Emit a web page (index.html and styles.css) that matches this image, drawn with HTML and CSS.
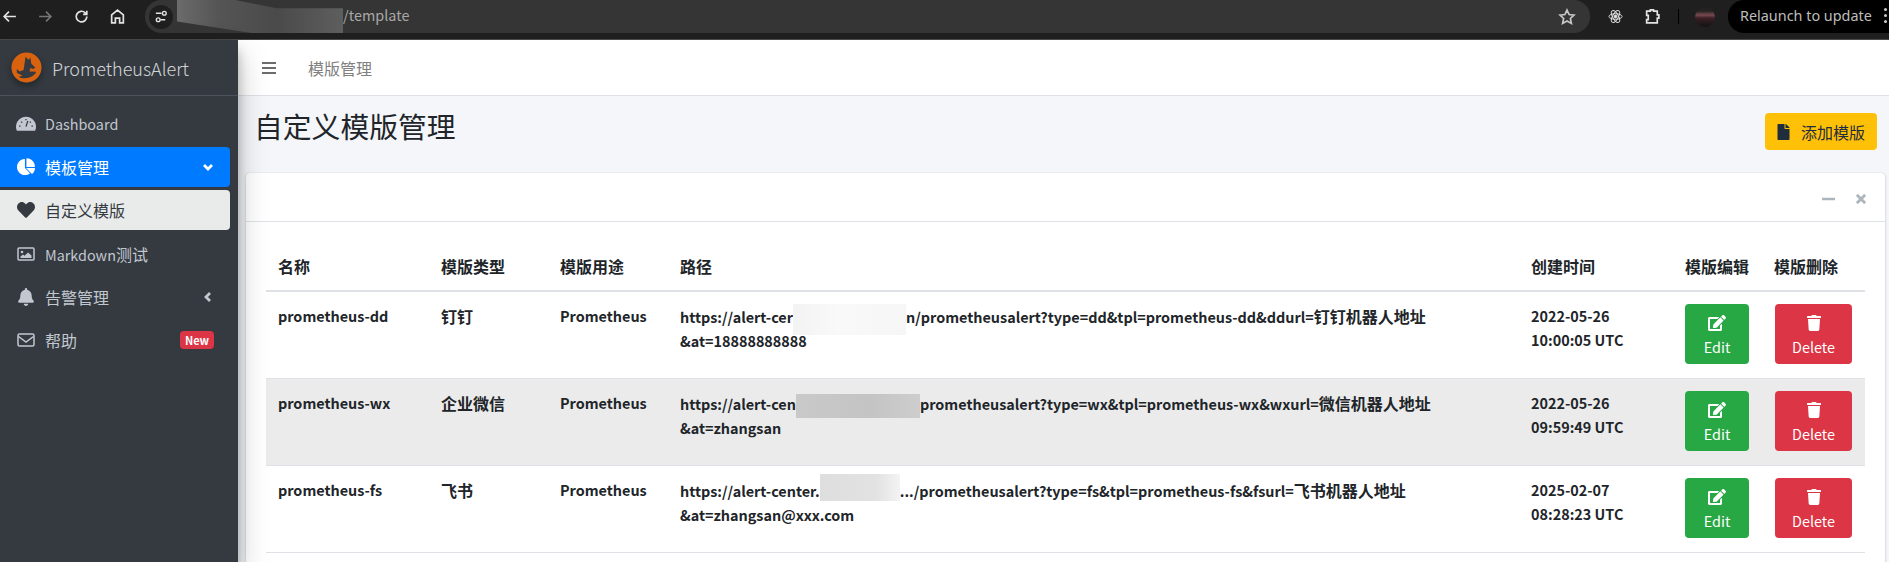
FILE: index.html
```html
<!DOCTYPE html>
<html lang="zh-CN">
<head>
    <meta charset="UTF-8">
    <title>PrometheusAlert</title>
    <link rel="stylesheet" href="styles.css">
</head>
<body>
    <svg class="icon-defs">
        <symbol id="i-edit" viewBox="0 0 576 512"><path d="M402.6 83.2l90.2 90.2c3.8 3.8 3.8 10 0 13.8L274.400 405.600l-92.800 10.300c-12.400 1.400-22.900-9.100-21.500-21.500l10.300-92.800L388.800 83.200c3.800-3.800 10-3.800 13.800 0zm162-22.900l-48.800-48.800c-15.200-15.200-39.900-15.200-55.200 0l-35.400 35.400c-3.800 3.800-3.800 10 0 13.800l90.200 90.200c3.800 3.800 10 3.800 13.800 0l35.400-35.400c15.200-15.300 15.200-40 0-55.200zM384 346.200V448H64V128h229.800c3.200 0 6.200-1.300 8.500-3.500l40-40c7.600-7.600 2.200-20.500-8.500-20.500H48C21.500 64 0 85.500 0 112v352c0 26.500 21.500 48 48 48h352c26.500 0 48-21.500 48-48V306.200c0-10.700-12.900-16-20.500-8.500l-40 40c-2.200 2.300-3.500 5.300-3.500 8.500z"/></symbol>
        <symbol id="i-trash" viewBox="0 0 448 512"><path d="M432 32H312l-9.400-18.700A24 24 0 0 0 281.100 0H166.800a23.720 23.720 0 0 0-21.400 13.300L136 32H16A16 16 0 0 0 0 48v32a16 16 0 0 0 16 16h416a16 16 0 0 0 16-16V48a16 16 0 0 0-16-16zM53.200 467a48 48 0 0 0 47.900 45h245.800a48 48 0 0 0 47.900-45L416 128H32z"/></symbol>
    </svg>

    <div class="chrome">
        <div class="chrome-nav">
            <svg class="chrome-icon" viewBox="0 0 16 16"><path d="M14 8H3M7.5 3.5 3 8l4.5 4.5"/></svg>
            <svg class="chrome-icon dim" viewBox="0 0 16 16"><path d="M2 8h11M8.5 3.5 13 8l-4.500 4.500"/></svg>
            <svg class="chrome-icon" viewBox="0 0 16 16"><path d="M13 8a5 5 0 1 1-1.500-3.500L13 6M13 2.500V6H9.500"/></svg>
            <svg class="chrome-icon" viewBox="0 0 16 16"><path d="M2.500 14V6.500L8 2l5.500 4.500V14H10V9.500H6V14z"/></svg>
        </div>
        <div class="omnibox">
            <span class="site-chip">
                <svg viewBox="0 0 16 16"><path d="M2 4.500h6M12 11.500H7"/><circle cx="11" cy="4.500" r="2"/><circle cx="4.500" cy="11.500" r="2"/></svg>
            </span>
            <span class="url-blur"></span>
            <span class="url-text">/template</span>
            <svg class="star" viewBox="0 0 16 16"><path d="m8 1.800 1.900 4 4.300.5-3.200 3 .9 4.400L8 11.500l-3.900 2.200.9-4.400-3.200-3 4.300-.5z"/></svg>
        </div>
        <div class="chrome-tools">
            <svg class="ext-atom" viewBox="0 0 16 16"><ellipse cx="8" cy="8" rx="7" ry="3"/><ellipse cx="8" cy="8" rx="7" ry="3" transform="rotate(60 8 8)"/><ellipse cx="8" cy="8" rx="7" ry="3" transform="rotate(120 8 8)"/><circle class="ext-core" cx="8" cy="8" r="1.500"/></svg>
            <svg class="chrome-icon ext-puzzle" viewBox="0 0 16 16"><path d="M2.500 3H6V1.800h3V3h3.500v3.500H14v3h-1.500V14h-10v-3H4V7H2.500z"/></svg>
            <span class="chrome-sep"></span>
            <span class="avatar"></span>
            <div class="relaunch">Relaunch to update<span class="menu-dots"></span></div>
        </div>
    </div>

    <div class="app">
        <aside class="sidebar">
            <div class="brand">
                <svg class="brand-logo" viewBox="0 0 32 32">
                    <circle cx="16" cy="16" r="15.500" fill="#d9620f"/>
                    <path fill="#343a40" d="M15 5l3 3 2-2 1 6 4 4-2 1.500-3-1-1 3.500 7 .5c-2 6-13 8.500-18 5l4-1-6-3 0-4 3 2.500 4-1.500z"/>
                </svg>
                <span class="brand-text">PrometheusAlert</span>
            </div>
            <nav class="side-nav">
                <a class="side-link">
                    <svg class="side-icon gauge" viewBox="0 0 576 512"><path d="M288 48C129 48 0 177 0 336c0 40 8 74 24 112h528c16-38 24-72 24-112C576 177 447 48 288 48z"/><path class="gauge-cut" d="M288 330 340 170M90 320h40M150 190l28 28M288 110v40M446 320h40M426 190l-28 28"/></svg>
                    <span class="side-label">Dashboard</span>
                </a>
                <a class="side-link is-open">
                    <svg class="side-icon" viewBox="0 0 544 512"><path d="M527.800 288H272l170.600 170.600c6.500 6.500 17.200 7 23.900.7 41.800-39.400 70.500-92.500 78.900-152.200 1.400-10.200-7.500-19.100-17.600-19.100zM544 239C536.600 106.900 432.900.5 300.900-8c-9-.6-16.900 7-16.900 16.400V256h243.800c9 0 17.100-7.900 16.200-17zM240 288V26.800c0-8.900-7.600-16.200-16.400-15.600C98.500 20.100 0 125 0 252.800 0 388.500 110 498.500 245.700 498.500c50.600 0 97.600-15.300 136.700-41.600 7.700-5.200 8.200-16.400 1.700-23z"/></svg>
                    <span class="side-label zh">模板管理</span>
                    <svg class="side-angle" viewBox="0 0 12 12"><path d="M2 4l4 4 4-4"/></svg>
                </a>
                <a class="side-link is-current">
                    <svg class="side-icon" viewBox="0 0 512 512"><path d="M462.300 62.600C407.500 15.900 326 24.300 275.700 76.200L256 96.500l-19.700-20.300C186.100 24.300 104.500 15.900 49.700 62.600c-62.800 53.600-66.100 149.800-9.900 207.900l193.500 199.800c12.500 12.900 32.800 12.900 45.300 0l193.500-199.800c56.300-58.100 53-154.300-9.800-207.900z"/></svg>
                    <span class="side-label zh">自定义模版</span>
                </a>
                <a class="side-link">
                    <svg class="side-icon line" viewBox="0 0 18 14"><rect x="1" y="1" width="16" height="12" rx="1"/><circle class="solid" cx="5" cy="5" r="1.300"/><path class="solid" d="M3.500 11V9.500L6 7.500l1.500 1.200L11 5.500l3.500 3V11z"/></svg>
                    <span class="side-label">Markdown<span class="zh">测试</span></span>
                </a>
                <a class="side-link">
                    <svg class="side-icon" viewBox="0 0 448 512"><path d="M224 512c35.320 0 63.970-28.650 63.970-64H160.030c0 35.350 28.650 64 63.970 64zm215.390-149.710c-19.320-20.760-55.470-51.990-55.470-154.290 0-77.700-54.480-139.900-127.940-155.160V32c0-17.670-14.320-32-31.980-32s-31.980 14.330-31.980 32v20.840C118.560 68.100 64.080 130.300 64.080 208c0 102.300-36.150 133.530-55.470 154.290-6 6.450-8.660 14.160-8.610 21.710.11 16.400 12.980 32 32.100 32h383.800c19.120 0 32-15.600 32.100-32 .05-7.550-2.610-15.270-8.610-21.710z"/></svg>
                    <span class="side-label zh">告警管理</span>
                    <svg class="side-angle" viewBox="0 0 12 12"><path d="M8 2 4 6l4 4"/></svg>
                </a>
                <a class="side-link">
                    <svg class="side-icon line" viewBox="0 0 18 14"><rect x="1" y="1" width="16" height="12" rx="1.500"/><path d="M1.500 3.500 9 9l7.500-5.500"/></svg>
                    <span class="side-label zh">帮助</span>
                    <span class="badge-new">New</span>
                </a>
            </nav>
        </aside>

        <div class="main">
            <header class="topbar">
                <svg class="bars" viewBox="0 0 14 12"><path d="M0 1h14M0 6h14M0 11h14"/></svg>
                <span class="topbar-link zh">模版管理</span>
            </header>
            <section class="content">
                <div class="content-head">
                    <h1>自定义模版管理</h1>
                    <a class="btn-add zh">
                        <svg viewBox="0 0 384 512"><path d="M224 136V0H24C10.700 0 0 10.700 0 24v464c0 13.300 10.700 24 24 24h336c13.300 0 24-10.700 24-24V160H248c-13.200 0-24-10.800-24-24zm160-14.100v6.100H256V0h6.100c6.400 0 12.500 2.500 17 7l97.900 98c4.500 4.500 7 10.600 7 16.900z"/></svg>
                        添加模版
                    </a>
                </div>
                <div class="card">
                    <div class="card-head">
                        <svg class="card-tool tool-min" viewBox="0 0 13 12"><path d="M0 6h13"/></svg>
                        <svg class="card-tool tool-close" viewBox="0 0 12 12"><path d="M1 1l10 10M11 1 1 11"/></svg>
                    </div>
                    <div class="card-body">
                        <table class="tpl-table">
                            <colgroup>
                                <col class="c-name"><col class="c-type"><col class="c-use"><col class="c-path"><col class="c-time"><col class="c-edit"><col class="c-del">
                            </colgroup>
                            <thead>
                                <tr><th>名称</th><th>模版类型</th><th>模版用途</th><th>路径</th><th>创建时间</th><th>模版编辑</th><th>模版删除</th></tr>
                            </thead>
                            <tbody>
                                <tr>
                                    <td>prometheus-dd</td><td class="zh">钉钉</td><td>Prometheus</td>
                                    <td>https://alert-cer<span class="mask mask-a"></span>n/prometheusalert?type=dd&amp;tpl=prometheus-dd&amp;ddurl=<span class="zh">钉钉机器人地址</span><br>&amp;at=18888888888</td>
                                    <td>2022-05-26<br>10:00:05 UTC</td>
                                    <td><a class="btn-act btn-edit"><svg class="act-edit"><use href="#i-edit"/></svg>Edit</a></td>
                                    <td><a class="btn-act btn-del"><svg class="act-trash"><use href="#i-trash"/></svg>Delete</a></td>
                                </tr>
                                <tr class="row-hover">
                                    <td>prometheus-wx</td><td class="zh">企业微信</td><td>Prometheus</td>
                                    <td>https://alert-cen<span class="mask mask-b"></span>prometheusalert?type=wx&amp;tpl=prometheus-wx&amp;wxurl=<span class="zh">微信机器人地址</span><br>&amp;at=zhangsan</td>
                                    <td>2022-05-26<br>09:59:49 UTC</td>
                                    <td><a class="btn-act btn-edit"><svg class="act-edit"><use href="#i-edit"/></svg>Edit</a></td>
                                    <td><a class="btn-act btn-del"><svg class="act-trash"><use href="#i-trash"/></svg>Delete</a></td>
                                </tr>
                                <tr>
                                    <td>prometheus-fs</td><td class="zh">飞书</td><td>Prometheus</td>
                                    <td>https://alert-center.<span class="mask mask-c"></span>.../prometheusalert?type=fs&amp;tpl=prometheus-fs&amp;fsurl=<span class="zh">飞书机器人地址</span><br>&amp;at=zhangsan@xxx.com</td>
                                    <td>2025-02-07<br>08:28:23 UTC</td>
                                    <td><a class="btn-act btn-edit"><svg class="act-edit"><use href="#i-edit"/></svg>Edit</a></td>
                                    <td><a class="btn-act btn-del"><svg class="act-trash"><use href="#i-trash"/></svg>Delete</a></td>
                                </tr>
                            </tbody>
                        </table>
                    </div>
                </div>
            </section>
        </div>
    </div>
</body>
</html>
```

FILE: styles.css
```css
* {
    box-sizing: border-box;
}
html, body {
    height: 562px;
    margin: 0;
    overflow: hidden;
}
body {
    font-family: "Noto Sans CJK SC", "Noto Sans", sans-serif;
    font-size: 14.4px;
    line-height: 24px;
    color: #212529;
}
.zh {
    font-size: 16px;
}
.icon-defs {
    display: none;
}

/* browser bar */
.chrome {
    display: flex;
    height: 40px;
    padding-bottom: 6px;
    background: #1f1f1f;
    border-bottom: 1px solid #4a4a4a;
    align-items: stretch;
}
.chrome-nav {
    display: flex;
    align-items: center;
    gap: 19px;
    width: 145px;
    padding-left: 1px;
}
.chrome-icon {
    width: 17px;
    height: 17px;
    fill: none;
    stroke: #e3e3e3;
    stroke-width: 1.6;
}
.chrome-icon.dim {
    stroke: #757575;
}
.omnibox {
    display: flex;
    align-items: center;
    width: 1445px;
    padding: 0 14px 0 4px;
    background: #353535;
    border-radius: 16px;
    color: #a8a8a8;
}
.site-chip {
    display: flex;
    align-items: center;
    justify-content: center;
    width: 24px;
    height: 24px;
    border-radius: 50%;
    background: #1f1f1f;
}
.site-chip svg {
    width: 15px;
    height: 15px;
    fill: none;
    stroke: #e3e3e3;
    stroke-width: 1.5;
}
.url-blur {
    width: 166px;
    height: 33px;
    margin-left: 4px;
    background: linear-gradient(90deg, #6b6b6b, #555 25%, #4a4a4a 60%, #5e5e5e);
    clip-path: polygon(0 0, 35% 0, 60% 25%, 100% 25%, 100% 100%, 45% 100%, 0 65%);
}
.url-text {
    flex: 1;
    padding-bottom: 3px;
}
.star {
    width: 18px;
    height: 18px;
    fill: none;
    stroke: #c7c7c7;
    stroke-width: 1.5;
}
.chrome-tools {
    display: flex;
    align-items: center;
    flex: 1;
    padding-left: 18px;
}
.ext-atom {
    width: 15px;
    height: 15px;
    fill: none;
    stroke: #e3e3e3;
    stroke-width: 1;
}
.ext-core {
    fill: #e3e3e3;
}
.ext-puzzle {
    margin-left: 21px;
}
.chrome-sep {
    width: 1px;
    height: 15px;
    margin-left: 17px;
    background: #000;
}
.avatar {
    width: 20px;
    height: 20px;
    margin-left: 16px;
    border-radius: 50%;
    background: linear-gradient(180deg, #222 20%, #7a4a50 40%, #3b2025 55%, #111);
}
.relaunch {
    display: flex;
    align-items: center;
    flex: 1;
    height: 33px;
    margin-left: 13px;
    padding: 0 0 2px 12px;
    border-radius: 16px 0 0 16px;
    background: #000;
    color: #bdbdbd;
    font-family: "Noto Sans", sans-serif;
    white-space: nowrap;
}
.menu-dots {
    width: 3px;
    height: 3px;
    margin-left: 12px;
    border-radius: 50%;
    background: #c7c7c7;
    box-shadow: 0 -6px 0 #c7c7c7, 0 6px 0 #c7c7c7;
}

/* page frame */
.app {
    display: flex;
    height: 522px;
}
.sidebar {
    position: relative;
    z-index: 2;
    flex: 0 0 238px;
    background: #343a40;
    box-shadow: 0 14px 28px rgba(0, 0, 0, .25), 0 10px 10px rgba(0, 0, 0, .22);
}
.brand {
    display: flex;
    align-items: center;
    height: 56px;
    padding-left: 11px;
    border-bottom: 1px solid #4b545c;
}
.brand-logo {
    width: 31px;
    height: 31px;
    border-radius: 50%;
    box-shadow: 0 3px 6px rgba(0, 0, 0, .35);
}
.brand-text {
    margin-left: 10px;
    color: rgba(255, 255, 255, .8);
    font-size: 18px;
    font-weight: 300;
}
.side-nav {
    padding: 8px 8px 0 0;
}
.side-link {
    display: flex;
    align-items: center;
    height: 40px;
    margin-bottom: 3px;
    padding: 0 16px 0 17px;
    border-radius: 0 4px 4px 0;
    color: #c2c7d0;
}
.side-label {
    flex: 1;
}
.side-icon {
    flex: none;
    width: 18px;
    height: 18px;
    margin-right: 10px;
    fill: currentColor;
}
.side-icon.gauge {
    width: 20px;
    height: 18px;
    margin: 0 9px 0 -1px;
}
.side-icon.line {
    fill: none;
    stroke: currentColor;
    stroke-width: 1.5;
}
.side-icon .solid {
    fill: currentColor;
    stroke: none;
}
.gauge-cut {
    fill: none;
    stroke: #343a40;
    stroke-width: 36;
}
.side-angle {
    width: 12px;
    height: 12px;
    fill: none;
    stroke: currentColor;
    stroke-width: 2.8;
}
.is-open {
    background: #007bff;
    color: #fff;
}
.is-current {
    margin-bottom: 4px;
    background: #e9ebea;
    color: #343a40;
}
.badge-new {
    padding: 0 5px;
    border-radius: 4px;
    background: #dc3545;
    color: #fff;
    font-size: 11px;
    font-weight: 700;
    line-height: 18px;
}
.main {
    display: flex;
    flex-direction: column;
    flex: 1;
    min-width: 0;
}
.topbar {
    display: flex;
    align-items: center;
    flex: 0 0 56px;
    padding-left: 24px;
    background: #fff;
    border-bottom: 1px solid #dee2e6;
}
.bars {
    width: 14px;
    height: 12px;
    fill: none;
    stroke: #6c6c6c;
    stroke-width: 2;
}
.topbar-link {
    margin-left: 32px;
    color: #808080;
}
.content {
    flex: 1;
    padding: 0 4px 0 8px;
    background: #f4f6f9;
}
.content-head {
    display: flex;
    align-items: flex-start;
    justify-content: space-between;
    height: 77px;
    padding: 10px 8px 0 8px;
}
.content-head h1 {
    margin: 0;
    font-size: 28.8px;
    font-weight: 400;
    line-height: 40px;
}
.btn-add {
    display: flex;
    align-items: center;
    width: 112px;
    height: 37px;
    margin-top: 7px;
    padding-left: 12px;
    border-radius: 4px;
    background: #ffc107;
    color: #1f2d3d;
}
.btn-add svg {
    width: 13px;
    height: 16px;
    margin-right: 11px;
    fill: #1f2d3d;
}
.card {
    height: 400px;
    border-radius: 4px;
    background: #fff;
    box-shadow: 0 0 1px rgba(0, 0, 0, .13), 0 1px 3px rgba(0, 0, 0, .2);
}
.card-head {
    display: flex;
    align-items: center;
    justify-content: flex-end;
    gap: 21px;
    height: 49px;
    padding: 4px 19px 0 0;
    border-bottom: 1px solid #dee2e6;
}
.card-tool {
    fill: none;
    stroke: #adb5bd;
    stroke-width: 2.5;
}
.tool-min {
    width: 13px;
    height: 12px;
}
.tool-close {
    width: 10px;
    height: 10px;
    stroke-width: 3.4;
}
.card-body {
    padding: 20px;
}

/* template table */
.tpl-table {
    width: 1599px;
    table-layout: fixed;
    border-collapse: collapse;
}
.c-name { width: 163px; }
.c-type { width: 119px; }
.c-use { width: 120px; }
.c-path { width: 851px; }
.c-time { width: 154px; }
.c-edit { width: 89px; }
.c-del { width: 103px; }
.tpl-table th {
    height: 49px;
    padding: 12px;
    border-bottom: 2px solid #dee2e6;
    font-size: 16px;
    font-weight: 700;
    text-align: left;
}
.tpl-table td {
    height: 87px;
    padding: 12px;
    border-bottom: 1px solid #dee2e6;
    font-weight: 700;
    vertical-align: top;
}
.row-hover {
    background: #ebebeb;
}
.mask {
    display: inline-block;
    margin: -10px 0;
    vertical-align: middle;
}
.mask-a {
    width: 113px;
    height: 31px;
    background: linear-gradient(90deg, #f3f3f3, #f9f9f9 40%, #f6f6f6);
}
.mask-b {
    width: 124px;
    height: 24px;
    background: linear-gradient(90deg, #c9c9c9, #c4c4c4 60%, #cdcdcd);
}
.mask-c {
    width: 80px;
    height: 27px;
    margin: -10px 0 -4px;
    vertical-align: baseline;
    background: linear-gradient(90deg, #dedede, #e2e2e2 70%, #f3f3f3);
}
.btn-act {
    display: flex;
    flex-direction: column;
    align-items: center;
    justify-content: flex-end;
    height: 60px;
    padding-bottom: 5px;
    border-radius: 4px;
    color: #fff;
    font-weight: 400;
}
.btn-act svg {
    height: 16px;
    margin-bottom: 4px;
    fill: #fff;
}
.act-edit {
    width: 18px;
}
.act-trash {
    width: 14px;
}
.btn-edit {
    width: 64px;
    background: #28a745;
}
.btn-del {
    width: 77px;
    margin-left: 1px;
    background: #dc3545;
}
```
